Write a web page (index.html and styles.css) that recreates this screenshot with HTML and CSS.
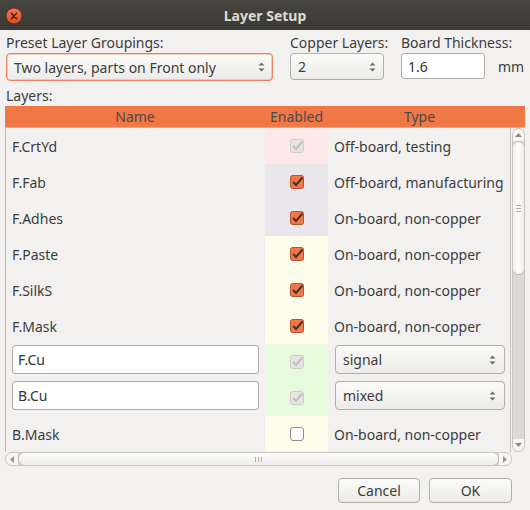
FILE: index.html
```html
<!DOCTYPE html>
<html>
<head>
<meta charset="utf-8">
<title>Layer Setup</title>
<link rel="stylesheet" href="styles.css">
</head>
<body>
<div class="titlebar">
  <span class="close">
    <svg width="18" height="18" viewBox="0 0 18 18">
      <defs>
        <linearGradient id="cg" x1="0" y1="0" x2="0" y2="1">
          <stop offset="0" stop-color="#f47a52"/>
          <stop offset="1" stop-color="#dd4a1c"/>
        </linearGradient>
      </defs>
      <circle cx="9" cy="9" r="8" fill="url(#cg)" stroke="#3a2a22" stroke-width="0.8"/>
      <path d="M6.3 6.3 L11.7 11.7 M11.7 6.3 L6.3 11.7" stroke="#3b1d12" stroke-width="1.4" stroke-linecap="round"/>
    </svg>
  </span>
  <span class="title">Layer Setup</span>
  <span></span>
</div>

<div class="content">
  <div class="top">
    <div class="field preset">
      <div class="label">Preset Layer Groupings:</div>
      <div class="combo focused">
        <span>Two layers, parts on Front only</span>
        <svg class="spin" width="7" height="12" viewBox="0 0 7 12"><path d="M3.5 1.5 L6.5 4.5 H0.5Z M3.5 10.5 L6.5 7.5 H0.5Z" fill="#6b6b6b"/></svg>
      </div>
    </div>
    <div class="field copper">
      <div class="label">Copper Layers:</div>
      <div class="combo">
        <span>2</span>
        <svg class="spin" width="7" height="12" viewBox="0 0 7 12"><path d="M3.5 1.5 L6.5 4.5 H0.5Z M3.5 10.5 L6.5 7.5 H0.5Z" fill="#6b6b6b"/></svg>
      </div>
    </div>
    <div class="field thick">
      <div class="label">Board Thickness:</div>
      <div class="thick-row">
        <div class="entry small">1.6</div>
        <span class="unit">mm</span>
      </div>
    </div>
  </div>

  <div class="layers-label">Layers:</div>

  <div class="table">
    <div class="thead">
      <div>Name</div>
      <div>Enabled</div>
      <div>Type</div>
    </div>
    <div class="body-wrap">
      <div class="tbody">
        <div class="row">
          <div class="c-name">F.CrtYd</div>
          <div class="c-en pink"><svg class="cb" width="14" height="14" viewBox="0 0 14 14"><rect x="0.5" y="0.5" width="13" height="13" rx="2" fill="#e6e5e3" stroke="#cdcbc8"/><path d="M3.2 7 L6 10 L12.5 2.5" fill="none" stroke="#c2c0bd" stroke-width="2"/></svg></div>
          <div class="c-type">Off-board, testing</div>
        </div>
        <div class="row">
          <div class="c-name">F.Fab</div>
          <div class="c-en lav"><svg class="cb" width="14" height="14" viewBox="0 0 14 14"><rect x="0.5" y="0.5" width="13" height="13" rx="2" fill="#f07746" stroke="#b9552e"/><path d="M3.2 7 L6 10 L12.5 2.5" fill="none" stroke="#4a2f28" stroke-width="2"/></svg></div>
          <div class="c-type">Off-board, manufacturing</div>
        </div>
        <div class="row">
          <div class="c-name">F.Adhes</div>
          <div class="c-en lav"><svg class="cb" width="14" height="14" viewBox="0 0 14 14"><rect x="0.5" y="0.5" width="13" height="13" rx="2" fill="#f07746" stroke="#b9552e"/><path d="M3.2 7 L6 10 L12.5 2.5" fill="none" stroke="#4a2f28" stroke-width="2"/></svg></div>
          <div class="c-type">On-board, non-copper</div>
        </div>
        <div class="row">
          <div class="c-name">F.Paste</div>
          <div class="c-en yel"><svg class="cb" width="14" height="14" viewBox="0 0 14 14"><rect x="0.5" y="0.5" width="13" height="13" rx="2" fill="#f07746" stroke="#b9552e"/><path d="M3.2 7 L6 10 L12.5 2.5" fill="none" stroke="#4a2f28" stroke-width="2"/></svg></div>
          <div class="c-type">On-board, non-copper</div>
        </div>
        <div class="row">
          <div class="c-name">F.SilkS</div>
          <div class="c-en yel"><svg class="cb" width="14" height="14" viewBox="0 0 14 14"><rect x="0.5" y="0.5" width="13" height="13" rx="2" fill="#f07746" stroke="#b9552e"/><path d="M3.2 7 L6 10 L12.5 2.5" fill="none" stroke="#4a2f28" stroke-width="2"/></svg></div>
          <div class="c-type">On-board, non-copper</div>
        </div>
        <div class="row">
          <div class="c-name">F.Mask</div>
          <div class="c-en yel"><svg class="cb" width="14" height="14" viewBox="0 0 14 14"><rect x="0.5" y="0.5" width="13" height="13" rx="2" fill="#f07746" stroke="#b9552e"/><path d="M3.2 7 L6 10 L12.5 2.5" fill="none" stroke="#4a2f28" stroke-width="2"/></svg></div>
          <div class="c-type">On-board, non-copper</div>
        </div>
        <div class="row">
          <div class="c-name"><div class="entry cell">F.Cu</div></div>
          <div class="c-en grn"><svg class="cb" width="14" height="14" viewBox="0 0 14 14"><rect x="0.5" y="0.5" width="13" height="13" rx="2" fill="#e6e5e3" stroke="#cdcbc8"/><path d="M3.2 7 L6 10 L12.5 2.5" fill="none" stroke="#c2c0bd" stroke-width="2"/></svg></div>
          <div class="c-type"><div class="combo cell"><span>signal</span><svg class="spin" width="7" height="12" viewBox="0 0 7 12"><path d="M3.5 1.5 L6.5 4.5 H0.5Z M3.5 10.5 L6.5 7.5 H0.5Z" fill="#6b6b6b"/></svg></div></div>
        </div>
        <div class="row">
          <div class="c-name"><div class="entry cell">B.Cu</div></div>
          <div class="c-en grn"><svg class="cb" width="14" height="14" viewBox="0 0 14 14"><rect x="0.5" y="0.5" width="13" height="13" rx="2" fill="#e6e5e3" stroke="#cdcbc8"/><path d="M3.2 7 L6 10 L12.5 2.5" fill="none" stroke="#c2c0bd" stroke-width="2"/></svg></div>
          <div class="c-type"><div class="combo cell"><span>mixed</span><svg class="spin" width="7" height="12" viewBox="0 0 7 12"><path d="M3.5 1.5 L6.5 4.5 H0.5Z M3.5 10.5 L6.5 7.5 H0.5Z" fill="#6b6b6b"/></svg></div></div>
        </div>
        <div class="row">
          <div class="c-name">B.Mask</div>
          <div class="c-en yel"><svg class="cb" width="14" height="14" viewBox="0 0 14 14"><rect x="0.5" y="0.5" width="13" height="13" rx="2.5" fill="#ffffff" stroke="#8f8d8a"/></svg></div>
          <div class="c-type">On-board, non-copper</div>
        </div>
      </div>
      <div class="vscroll">
        <div class="trough">
          <div class="arrow-up"><svg width="7" height="4" viewBox="0 0 7 4"><path d="M3.5 0 L7 4 H0Z" fill="#8a8884"/></svg></div>
          <div class="vthumb"><span class="grip-v"></span></div>
          <div class="vspace"></div>
          <div class="arrow-down"><svg width="7" height="4" viewBox="0 0 7 4"><path d="M3.5 4 L7 0 H0Z" fill="#8a8884"/></svg></div>
        </div>
      </div>
    </div>
    <div class="hscroll-row">
      <div class="hscroll">
        <div class="arrow-left"><svg width="4" height="7" viewBox="0 0 4 7"><path d="M0 3.5 L4 0 V7Z" fill="#9a9894"/></svg></div>
        <div class="hthumb"><span class="grip-h"></span></div>
        <div class="arrow-right"><svg width="4" height="7" viewBox="0 0 4 7"><path d="M4 3.5 L0 0 V7Z" fill="#9a9894"/></svg></div>
      </div>
    </div>
  </div>

  <div class="buttons">
    <div class="btn cancel">Cancel</div>
    <div class="btn ok">OK</div>
  </div>
</div>
</body>
</html>
```

FILE: styles.css
```css
* { box-sizing: border-box; }

html, body {
  margin: 0;
  padding: 0;
}

body {
  width: 530px;
  height: 510px;
  overflow: hidden;
  background: #f2f1f0;
  font-family: "Noto Sans", "DejaVu Sans", sans-serif;
  font-size: 14px;
  color: #3c3c3c;
}

/* title bar */
.titlebar {
  height: 30px;
  background: linear-gradient(#46453f, #3a3934);
  display: grid;
  grid-template-columns: 40px 1fr 40px;
  align-items: center;
}
.close {
  display: flex;
  margin-left: 5px;
  margin-top: 1px;
}
.title {
  text-align: center;
  font-weight: bold;
  color: #dfdbd2;
  font-size: 14px;
}

.content {
  padding: 4px 5px 0 5px;
}

/* top fields */
.top {
  display: flex;
  padding-left: 1px;
}
.label {
  height: 17px;
  line-height: 17px;
  margin-bottom: 2px;
  white-space: nowrap;
}
.preset { width: 267px; }
.copper { width: 94px; margin-left: 17px; }
.thick { margin-left: 17px; }

.combo {
  display: flex;
  align-items: center;
  justify-content: space-between;
  height: 28px;
  padding: 0 7px 0 7px;
  border: 1px solid #b1aea9;
  border-radius: 4px;
  background: linear-gradient(#fbfbfa, #ecebe9);
  white-space: nowrap;
}
.combo.focused {
  border-color: #e9825a;
  box-shadow: inset 0 0 0 0.5px #f3a383;
}
.copper .combo {
  margin-top: 1px;
  height: 27px;
}
.spin { flex: none; }

.thick-row {
  display: flex;
  align-items: center;
  margin-top: 1px;
}
.entry {
  background: #ffffff;
  border: 1px solid #aeaba6;
  border-radius: 3px;
  display: flex;
  align-items: center;
  padding-left: 6px;
  color: #333333;
}
.entry.small {
  width: 84px;
  height: 26px;
}
.unit {
  margin-left: 13px;
}

.layers-label {
  margin-top: 6px;
  height: 17px;
  line-height: 17px;
  padding-left: 1px;
  margin-bottom: 2px;
}

/* table */
.table {
  width: 520px;
}
.thead {
  display: grid;
  grid-template-columns: 260px 63px 183px 14px;
  height: 21px;
  line-height: 21px;
  background: #f07746;
  color: #4b4b4b;
  text-align: center;
}
.body-wrap {
  display: flex;
  height: 325px;
  border-top: 1px solid #b9b6b1;
}
.tbody {
  flex: 1;
  border-left: 1px solid #bbb8b3;
  border-right: 1px solid #c7c4bf;
  overflow: hidden;
}
.row {
  display: grid;
  grid-template-columns: 259px 63px 1fr;
  height: 36px;
}
.c-name {
  padding-left: 6px;
  display: flex;
  align-items: center;
}
.c-en {
  display: flex;
  align-items: center;
  justify-content: center;
}
.c-type {
  padding-left: 6px;
  display: flex;
  align-items: center;
  white-space: nowrap;
}
.pink { background: #fde8ea; }
.lav { background: #e9e7ec; }
.yel { background: #fefdeb; }
.grn { background: #e8fadc; }

.cb { display: block; overflow: visible; }

.entry.cell {
  align-self: flex-start;
  margin-top: 1px;
  width: 247px;
  height: 29px;
  padding-left: 5px;
}
.combo.cell {
  align-self: flex-start;
  margin-top: 1px;
  margin-left: 1px;
  width: 170px;
  height: 29px;
  padding-left: 7px;
  padding-right: 8px;
}

/* vertical scrollbar */
.vscroll {
  width: 14px;
  background: #f2f1f0;
  padding: 0 0 0 1px;
}
.trough {
  height: 100%;
  border: 1px solid #c9c6c1;
  border-radius: 7px;
  background: #dcdad6;
  display: flex;
  flex-direction: column;
  overflow: hidden;
}
.arrow-up, .arrow-down {
  height: 12px;
  display: flex;
  align-items: center;
  justify-content: center;
  background: #f7f6f5;
  flex: none;
}
.arrow-up { border-radius: 6px 6px 0 0; }
.arrow-down { border-radius: 0 0 6px 6px; }
.vthumb {
  height: 134px;
  flex: none;
  border: 1px solid #b9b6b1;
  border-radius: 6px;
  background: linear-gradient(90deg, #f1f0ef, #fcfcfb 50%, #eeedeb);
  margin: 0 -1px;
  display: flex;
  align-items: center;
  justify-content: center;
}
.grip-v {
  width: 5px;
  height: 7px;
  background: repeating-linear-gradient(#b3b0ab 0 1px, transparent 1px 3px);
}
.vspace { flex: 1; }

/* horizontal scrollbar */
.hscroll-row {
  height: 14px;
  padding-right: 13px;
}
.hscroll {
  height: 14px;
  border: 1px solid #c9c6c1;
  border-radius: 7px;
  background: #dcdad6;
  display: flex;
  overflow: hidden;
}
.arrow-left, .arrow-right {
  width: 12px;
  flex: none;
  display: flex;
  align-items: center;
  justify-content: center;
  background: #f7f6f5;
}
.hthumb {
  flex: 1;
  border: 1px solid #b9b6b1;
  border-radius: 6px;
  background: linear-gradient(#fcfcfb, #eeedeb);
  margin: -1px 0;
  display: flex;
  align-items: center;
  justify-content: center;
}
.grip-h {
  width: 7px;
  height: 5px;
  background: repeating-linear-gradient(90deg, #b3b0ab 0 1px, transparent 1px 3px);
}

/* buttons */
.buttons {
  display: flex;
  justify-content: flex-end;
  gap: 9px;
  margin-top: 12px;
  padding-right: 13px;
}
.btn {
  height: 25px;
  border: 1px solid #b1aea9;
  border-radius: 4px;
  background: linear-gradient(#fbfbfa, #ecebe9);
  display: flex;
  align-items: center;
  justify-content: center;
}
.cancel { width: 82px; }
.ok { width: 83px; }
```
